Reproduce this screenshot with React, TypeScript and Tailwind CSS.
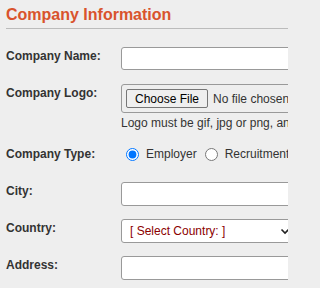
import React from 'react';

const labelCls = 'w-[115px] shrink-0 pt-[2px] text-[12px] font-bold leading-[14px] text-[#333]';
const inputCls = 'w-[220px] shrink-0 rounded-[3px] border border-[#999] bg-white px-1 text-[12px]';

const App = () => {
  return (
    <div
      className="h-screen w-full overflow-hidden bg-[#eeeeee] text-[#333]"
      style={{ fontFamily: '"Liberation Sans", Arial, sans-serif' }}
    >
      <div className="h-[288px] w-[288px] overflow-hidden pl-[6px] pt-[5px]">
        <h2 className="text-[16px] font-bold leading-[20px] text-[#d9532c]">Company Information</h2>
        <div className="mt-[3px] h-px w-[300px] bg-[#bbbbbb]" />

        <div className="mt-[18px] flex flex-col">
          {/* name */}
          <div className="flex">
            <div className={labelCls}>Company Name:</div>
            <input className={`${inputCls} h-[23px]`} />
          </div>

          {/* logo */}
          <div className="mt-[14px] flex">
            <div className={labelCls}>Company Logo:</div>
            <div className="flex flex-col">
              <div className="flex h-[29px] w-[220px] items-center rounded-[3px] border border-[#999] pl-[4px]">
                <span className="flex h-[19px] items-center rounded-[2px] border border-[#767676] bg-[#efefef] px-[8px] text-[12px] text-black">
                  Choose File
                </span>
                <span className="ml-[5px] whitespace-nowrap text-[12px] text-[#333]">No file chosen</span>
              </div>
              <div className="mt-[3px] whitespace-nowrap text-[12px] leading-[14px] text-[#333]">
                Logo must be gif, jpg or png, and less than 100kb
              </div>
            </div>
          </div>

          {/* type */}
          <div className="mt-[16px] flex h-[16px] items-center">
            <div className={`${labelCls} !pt-0`}>Company Type:</div>
            <label className="ml-[5px] flex items-center whitespace-nowrap text-[12px]">
              <input type="radio" name="t" defaultChecked className="m-0 h-[13px] w-[13px] accent-[#0075ff]" />
              <span className="ml-[7px]">Employer</span>
            </label>
            <label className="ml-[8px] flex items-center whitespace-nowrap text-[12px]">
              <input type="radio" name="t" className="m-0 h-[13px] w-[13px]" />
              <span className="ml-[7px]">Recruitment Agency</span>
            </label>
          </div>

          {/* city */}
          <div className="mt-[20px] flex">
            <div className={labelCls}>City:</div>
            <input className={`${inputCls} h-[24px]`} />
          </div>

          {/* country */}
          <div className="mt-[13px] flex">
            <div className={labelCls}>Country:</div>
            <div className="flex h-[24px] w-[172px] shrink-0 items-center justify-between rounded-[3px] border border-[#999] bg-white pl-[8px] pr-[2px]">
              <span className="whitespace-nowrap text-[12px] text-[#8b0000]">[ Select Country: ]</span>
              <svg width="10" height="10" viewBox="0 0 10 10">
                <path d="M1.5 3.5 L5 7 L8.5 3.5" fill="none" stroke="#222" strokeWidth="1.6" />
              </svg>
            </div>
          </div>

          {/* address */}
          <div className="mt-[13px] flex">
            <div className={labelCls}>Address:</div>
            <input className={`${inputCls} h-[24px]`} />
          </div>
        </div>
      </div>
    </div>
  );
};

export default App;
